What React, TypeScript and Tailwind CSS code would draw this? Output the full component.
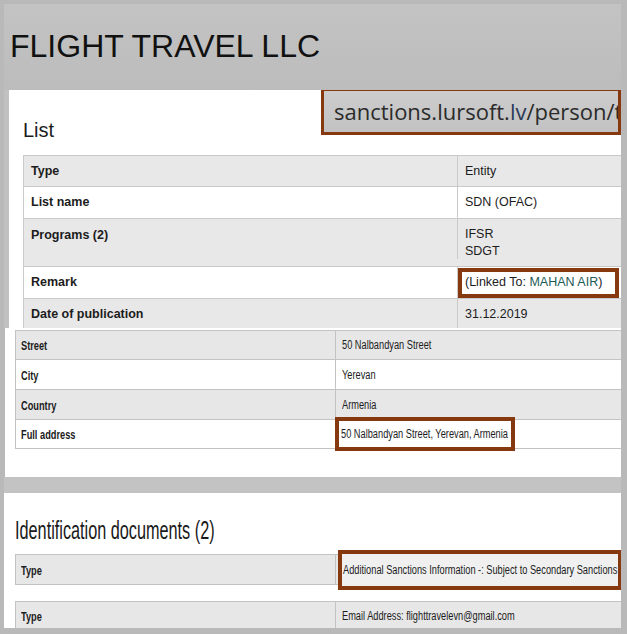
import React from 'react';

type Row = { label: string; value: React.ReactNode; h: string; gray?: boolean; top?: boolean };

const brown = 'border-[#86380f]';

// narrow text used by the second and third screenshots (they were shrunk sideways)
const Narrow = ({ children, bold }: { children: React.ReactNode; bold?: boolean }) => (
  <span className={`inline-block origin-left scale-x-[0.77] whitespace-nowrap text-[12px] leading-none ${bold ? 'font-bold' : ''}`}>
    {children}
  </span>
);

const listRows: Row[] = [
  { label: 'Type', value: 'Entity', h: 'h-[31px]', gray: true },
  { label: 'List name', value: 'SDN (OFAC)', h: 'h-[32px]' },
  {
    label: 'Programs (2)',
    value: (
      <div className="leading-[17px]">
        <div>IFSR</div>
        <div>SDGT</div>
      </div>
    ),
    h: 'h-[48px]',
    gray: true,
    top: true,
  },
  {
    label: 'Remark',
    value: (
      <div className={`-ml-[7px] flex h-[30px] w-[161px] items-center border-4 ${brown} bg-white pl-[3px]`}>
        (Linked To:&nbsp;<span className="text-[#1d5b55]">MAHAN AIR</span>)
      </div>
    ),
    h: 'h-[32px]',
  },
  { label: 'Date of publication', value: '31.12.2019', h: 'h-[32px]', gray: true },
];

const addressRows: Row[] = [
  { label: 'Street', value: <Narrow>50 Nalbandyan Street</Narrow>, h: 'h-[29px]', gray: true },
  { label: 'City', value: <Narrow>Yerevan</Narrow>, h: 'h-[30px]' },
  { label: 'Country', value: <Narrow>Armenia</Narrow>, h: 'h-[30px]', gray: true },
  {
    label: 'Full address',
    value: (
      <div className={`-ml-[7px] flex h-[34px] w-[180px] shrink-0 items-center border-4 ${brown} bg-white pl-[2px]`}>
        <Narrow>50 Nalbandyan Street, Yerevan, Armenia</Narrow>
      </div>
    ),
    h: 'h-[29px]',
  },
];

export default function App() {
  return (
    <div className="h-[634px] w-[627px] overflow-hidden bg-[#b9b9b9] pb-[6px] pl-[4px] pr-[6px] pt-[4px] font-['Liberation_Sans',Arial,sans-serif] text-[#1c1c1c]">
      <div className="flex h-full w-full flex-col overflow-hidden">
        {/* first screenshot */}
        <div className="flex h-[324px] shrink-0 flex-col bg-[#c1c1c1]">
          <div className="h-[86px] shrink-0 bg-gradient-to-b from-[#c3c3c3] to-[#bcbcbc] pl-[6px] pt-[26px]">
            <h1 className="whitespace-nowrap text-[32px] leading-none text-[#111]">FLIGHT TRAVEL LLC</h1>
          </div>
          <div className="ml-[5px] flex-1 overflow-hidden bg-white">
            <div className="flex h-[65px]">
              <div className="pl-[14px] pt-[30px] text-[20px] leading-none">List</div>
              <div className={`-mt-[2px] ml-auto flex h-[47px] w-[300px] items-center overflow-hidden border-[3px] ${brown} bg-gradient-to-b from-[#cdcdcd] to-[#c2c2c2] pl-[10px] font-['Open_Sans',sans-serif] text-[22px] whitespace-nowrap text-[#2b2b2b]`}>
                sanctions.lursoft.<span className="text-[#2c3a57]">lv</span>/person/t
              </div>
            </div>
            <div className="ml-[14px] w-[640px] border-l border-t border-[#cacaca] text-[12.5px]">
              {listRows.map((r) => (
                <div key={r.label} className={`flex border-b border-[#cacaca] ${r.h} ${r.gray ? 'bg-[#e8e8e8]' : 'bg-white'} ${r.top ? 'items-start pt-[7px]' : 'items-center'}`}>
                  <div className="w-[433px] pl-[7px] font-bold">{r.label}</div>
                  <div className={`flex h-full flex-1 border-l border-[#cacaca] pl-[7px] ${r.top ? '-mt-[7px] items-start pt-[7px]' : 'items-center'}`}>{r.value}</div>
                </div>
              ))}
            </div>
          </div>
        </div>

        {/* second screenshot: address */}
        <div className="ml-[1px] h-[149px] shrink-0 bg-white pl-[10px] pt-[2px]">
          <div className="w-[640px] border-l border-t border-[#c3c3c3]">
            {addressRows.map((r) => (
              <div key={r.label} className={`flex items-center border-b border-[#c3c3c3] ${r.h} ${r.gray ? 'bg-[#e7e7e7]' : 'bg-white'}`}>
                <div className="w-[319px] pl-[5px]"><Narrow bold>{r.label}</Narrow></div>
                <div className="flex h-full flex-1 items-center border-l border-[#c3c3c3] pl-[6px]">{r.value}</div>
              </div>
            ))}
          </div>
        </div>

        <div className="h-[16px] shrink-0 bg-[#c3c3c3]" />

        {/* third screenshot: documents */}
        <div className="flex-1 overflow-hidden bg-white pl-[11px] pt-[25px]">
          <h2 className="origin-left scale-x-[0.65] whitespace-nowrap text-[25px] leading-none text-[#1a1a1a]">Identification documents (2)</h2>
          <div className="mt-[11px] flex h-[31px] w-[640px] items-center border border-[#c3c3c3] bg-[#e7e7e7]">
            <div className="w-[319px] pl-[5px]"><Narrow bold>Type</Narrow></div>
            <div className="flex h-full flex-1 items-center border-l border-[#c3c3c3]">
              <div className={`ml-[2px] flex h-[40px] w-[284px] shrink-0 items-center border-4 ${brown} bg-[#f0f0f0] pl-[1px]`}>
                <Narrow>Additional Sanctions Information -: Subject to Secondary Sanctions</Narrow>
              </div>
            </div>
          </div>
          <div className="mt-[16px] flex h-[30px] w-[640px] items-center border border-[#c3c3c3] bg-[#e7e7e7]">
            <div className="w-[319px] pl-[5px]"><Narrow bold>Type</Narrow></div>
            <div className="flex h-full flex-1 items-center border-l border-[#c3c3c3] pl-[6px]">
              <Narrow>Email Address: flighttravelevn@gmail.com</Narrow>
            </div>
          </div>
        </div>
      </div>
    </div>
  );
}
